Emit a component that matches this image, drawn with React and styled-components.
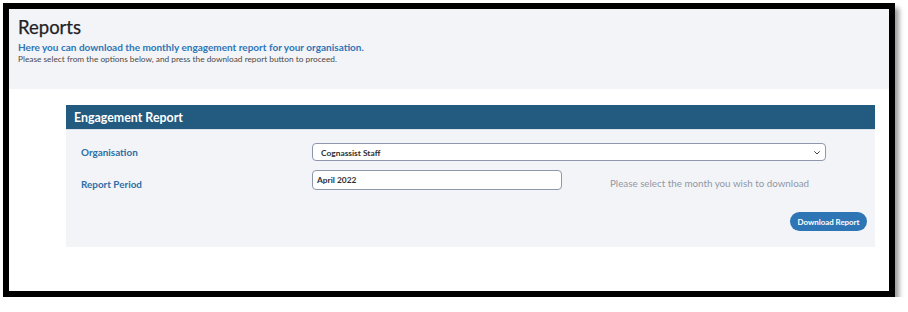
import React from "react";
import styled, { createGlobalStyle } from "styled-components";

const Global = createGlobalStyle`
  html, body { margin: 0; padding: 0; background: #ffffff; }
  body { font-family: "Lato", "Open Sans", sans-serif; }
  * { box-sizing: border-box; }
`;

const Frame = styled.div`
  margin: 3px 0 0 3px;
  width: 892px;
  height: 294px;
  border: 6px solid #000;
  box-shadow: 4px 5px 5px rgba(0, 0, 0, 0.4);
  background: #fff;
  display: flex;
  flex-direction: column;
`;

const PageHeader = styled.header`
  background: #f3f4f8;
  height: 80px;
  padding: 6px 9px 0;
  display: flex;
  flex-direction: column;
`;

const Title = styled.h1`
  margin: 0;
  font-size: 18.5px;
  font-weight: 400;
  color: #222226;
  line-height: 24px;
  -webkit-text-stroke: 0.25px #222226;
`;

const Lead = styled.p`
  margin: 2px 0 0;
  font-size: 10px;
  font-weight: 700;
  color: #2f74b5;
  line-height: 12px;
`;

const Note = styled.p`
  margin: 1px 0 0;
  font-size: 8.3px;
  color: #4a4a4a;
  line-height: 10px;
`;

const Card = styled.section`
  margin: 16px 0 0 57px;
  width: 809px;
  background: #f3f4f8;
`;

const CardHeader = styled.div`
  background: #235a80;
  height: 25px;
  border-bottom: 1px solid #dde3ea;
  padding: 0 8px;
  display: flex;
  align-items: center;
  color: #fff;
  font-size: 12.4px;
  font-weight: 700;
`;

const CardBody = styled.div`
  padding: 13px 8px 16px 15px;
  display: flex;
  flex-direction: column;
`;

const Row = styled.div`
  display: flex;
  align-items: center;
  margin-top: ${(p) => p.$gap || 0}px;
`;

const Label = styled.label`
  width: 231px;
  font-size: 9.9px;
  font-weight: 700;
  color: #2d6ea6;
  padding-top: ${(p) => p.$drop || 0}px;
`;

const SelectBox = styled.div`
  width: 514px;
  height: 18px;
  border: 1px solid #8e97ab;
  border-radius: 4px;
  background: #fff;
  display: flex;
  align-items: center;
  justify-content: space-between;
  padding: 1px 5px 0 8px;
  font-size: 8.4px;
  font-weight: 700;
  color: #2f2f33;
`;

const InputBox = styled.div`
  width: 250px;
  height: 20px;
  border: 1px solid #8e97ab;
  border-radius: 4px;
  background: #fff;
  display: flex;
  align-items: center;
  padding: 0 4px;
  font-size: 8.4px;
  font-weight: 700;
  color: #2f2f33;
`;

const Helper = styled.span`
  margin-left: 48px;
  font-size: 9.8px;
  color: #9097a6;
  padding-top: 6px;
`;

const Actions = styled.div`
  display: flex;
  justify-content: flex-end;
  margin-top: 22px;
`;

const Button = styled.button`
  height: 19px;
  width: 77px;
  border: none;
  border-radius: 10px;
  background: #2e75b6;
  color: #fff;
  font-family: inherit;
  font-size: 7.9px;
  font-weight: 700;
  padding: 0;
  cursor: pointer;
`;

const Chevron = () => (
  <svg width="6" height="4" viewBox="0 0 6 4" fill="none">
    <path d="M0.6 0.6 L3 3 L5.4 0.6" stroke="#444" strokeWidth="1" strokeLinecap="round" strokeLinejoin="round" />
  </svg>
);

export default function App() {
  return (
    <>
      <Global />
      <Frame>
        <PageHeader>
          <Title>Reports</Title>
          <Lead>Here you can download the monthly engagement report for your organisation.</Lead>
          <Note>Please select from the options below, and press the download report button to proceed.</Note>
        </PageHeader>
        <Card>
          <CardHeader>Engagement Report</CardHeader>
          <CardBody>
            <Row>
              <Label $drop={0}>Organisation</Label>
              <SelectBox>
                <span>Cognassist Staff</span>
                <Chevron />
              </SelectBox>
            </Row>
            <Row $gap={9}>
              <Label $drop={7}>Report Period</Label>
              <InputBox>April 2022</InputBox>
              <Helper>Please select the month you wish to download</Helper>
            </Row>
            <Actions>
              <Button>Download Report</Button>
            </Actions>
          </CardBody>
        </Card>
      </Frame>
    </>
  );
}
